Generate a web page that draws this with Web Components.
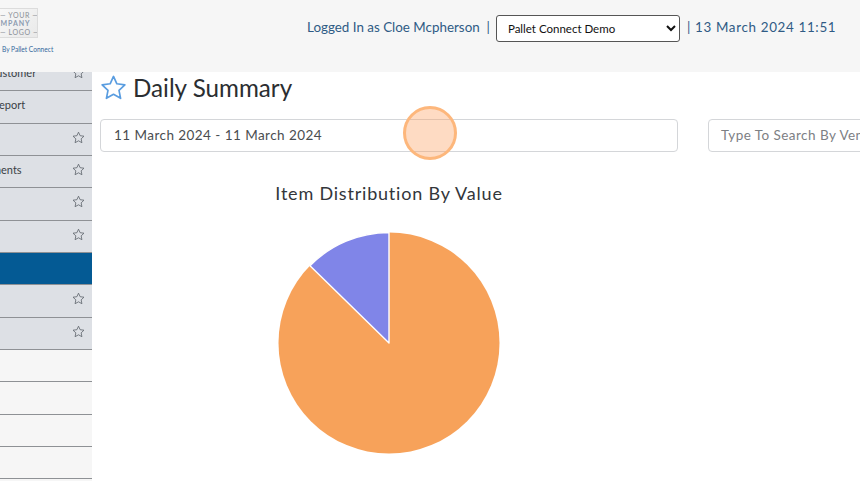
<!DOCTYPE html>
<html><head><meta charset="utf-8"><title>Daily Summary</title>
<style>
html,body{margin:0;padding:0;height:100%;overflow:hidden;background:#fff}
body{font-family:Lato,"Liberation Sans",sans-serif}
</style></head><body>
<app-shell>
  <top-bar slot="top"></top-bar>
  <side-nav slot="side">
    <nav-row label="Customer" shift="-11" star></nav-row>
    <nav-row label="Stock Report" shift="-37"></nav-row>
    <nav-row star></nav-row>
    <nav-row label="Adjustments" shift="-39" star></nav-row>
    <nav-row star></nav-row>
    <nav-row star></nav-row>
    <nav-row active></nav-row>
    <nav-row star></nav-row>
    <nav-row star></nav-row>
    <nav-row plain></nav-row>
    <nav-row plain></nav-row>
    <nav-row plain></nav-row>
    <nav-row plain></nav-row>
  </side-nav>
  <daily-summary slot="main"></daily-summary>
</app-shell>
<script>
const star=(size,color,w)=>`<svg width="${size}" height="${size}" viewBox="0 0 24 24" fill="none" stroke="${color}" stroke-width="${w}" stroke-linejoin="round"><path d="M12 2.2l3 6.5 7.1.9-5.2 4.9 1.4 7.1-6.3-3.5-6.3 3.5 1.4-7.1-5.2-4.9 7.1-.9z"/></svg>`;
customElements.define('app-shell',class extends HTMLElement{constructor(){super();this.attachShadow({mode:'open'}).innerHTML=`<style>
:host{display:flex;flex-direction:column;width:860px;height:481px;overflow:hidden}
.b{display:flex;flex:1;min-height:0}
</style><slot name="top"></slot><div class="b"><slot name="side"></slot><slot name="main"></slot></div>`}});
customElements.define('top-bar',class extends HTMLElement{constructor(){super();this.attachShadow({mode:'open'}).innerHTML=`<style>
:host{display:flex;flex:none;height:72px;background:#f6f6f6;color:#2f5b85;font-family:Lato,sans-serif;font-size:13.4px;overflow:hidden}
.brand{width:92px;flex:none;padding-top:8px;box-sizing:border-box}
.logo{width:38px;height:30px;box-sizing:border-box;border:1px solid #dcdcdc;border-left:0;background:linear-gradient(135deg,#f8f8f8,#e9e9e9);color:#8a8f96;font:7px/8.4px Lato,sans-serif;letter-spacing:.6px;text-align:center;padding-top:2px;overflow:hidden;white-space:nowrap}
.logo b{font-weight:700;color:#8c9bb0;letter-spacing:.9px;display:block;margin:0 5px 0 -13px}
.by{font-size:6.6px;margin:6px 0 0 2px;color:#34689c;white-space:nowrap;line-height:10px}
.user{margin-left:215px;height:57px;display:flex;align-items:center;white-space:nowrap}
.user span{padding-bottom:3px}
select{width:184px;height:27px;margin:0 7px 0 6px;box-sizing:border-box;border:1px solid #555;border-radius:3px;background:#fff;color:#111;font:11.5px Lato,sans-serif;padding-left:7px}
.date{letter-spacing:.66px}
</style>
<div class="brand"><div class="logo">— YOUR —<b>COMPANY</b>— LOGO —</div><div class="by">By Pallet Connect</div></div>
<div class="user"><span>Logged In as Cloe Mcpherson&nbsp; |</span><select><option>Pallet Connect Demo</option></select><span class="date">| 13 March 2024 11:51</span></div>`}});
customElements.define('side-nav',class extends HTMLElement{constructor(){super();this.attachShadow({mode:'open'}).innerHTML=`<style>
:host{display:block;width:92px;flex:none;overflow:hidden;background:#f6f6f6}
.s{margin-top:-13.2px}
</style><div class="s"><slot></slot></div>`}});
customElements.define('nav-row',class extends HTMLElement{connectedCallback(){if(this.shadowRoot)return;
const label=this.getAttribute('label')||'',shift=this.getAttribute('shift')||0;
const bg=this.hasAttribute('active')?'#045a94':this.hasAttribute('plain')?'#f6f6f6':'#dde0e5';
const r=this.attachShadow({mode:'open'});
r.innerHTML=`<style>
:host{display:flex;align-items:center;box-sizing:border-box;height:32.35px;padding-bottom:4px;border-bottom:1px solid #8e9195;background:${bg};color:#3a3f45;font:11px Lato,sans-serif;overflow:hidden;white-space:nowrap}
span{margin-left:${shift}px;flex:1}
svg{flex:none;margin-right:7px;display:block}
</style><span>${label}</span>${this.hasAttribute('star')?star(13,'#5e646b',1.5):''}`}});
customElements.define('daily-summary',class extends HTMLElement{constructor(){super();this.attachShadow({mode:'open'}).innerHTML=`<style>
:host{display:block;flex:1;min-width:0;overflow:hidden;background:#fff;position:relative;font-family:Lato,sans-serif}
.title{display:flex;align-items:center;gap:6px;margin:0 0 0 8px;height:30px;font-size:24.2px;color:#2b2e31;white-space:nowrap}
.title svg{display:block;flex:none}
.filters{display:flex;gap:30px;margin:17px 0 0 8px;width:1000px}
.f{height:33px;box-sizing:border-box;border:1px solid #d4d6d9;border-radius:4px;display:flex;align-items:center;padding:0 0 2px 13px;font-size:13.5px;letter-spacing:.45px;color:#4a4d50;white-space:nowrap;flex:none}
.date{width:578px}
.search{width:300px;color:#7d8084;padding-left:12px}
.chart{width:578px;margin:28px 0 0 8px;text-align:center}
h3{margin:0;font-weight:400;font-size:18px;letter-spacing:.8px;line-height:26px;color:#33363a}
svg.pie{display:block;margin:26px 0 0 178px}
.ring{position:absolute;left:311px;top:35px;width:54px;height:54px;box-sizing:border-box;border-radius:50%;border:3px solid #fdb77c;background:rgba(253,160,96,.38);margin-top:-1px;margin-left:-.5px}
</style>
<div class="title">${star(27,'#5a9de0',1.5)}<span>Daily Summary</span></div>
<div class="filters"><div class="f date">11 March 2024 - 11 March 2024</div><div class="f search">Type To Search By Vendor</div></div>
<div class="chart"><h3>Item Distribution By Value</h3>
<svg class="pie" width="222" height="222" viewBox="-111 -111 222 222"><circle r="110.5" fill="#f7a25a"/><path d="M0 0V-110.5A110.5 110.5 0 0 0 -79 -77.3Z" fill="#8085e8" stroke="#fff" stroke-width="1.4" stroke-linejoin="round"/></svg></div>
<div class="ring"></div>`}});
</script>
</body></html>
